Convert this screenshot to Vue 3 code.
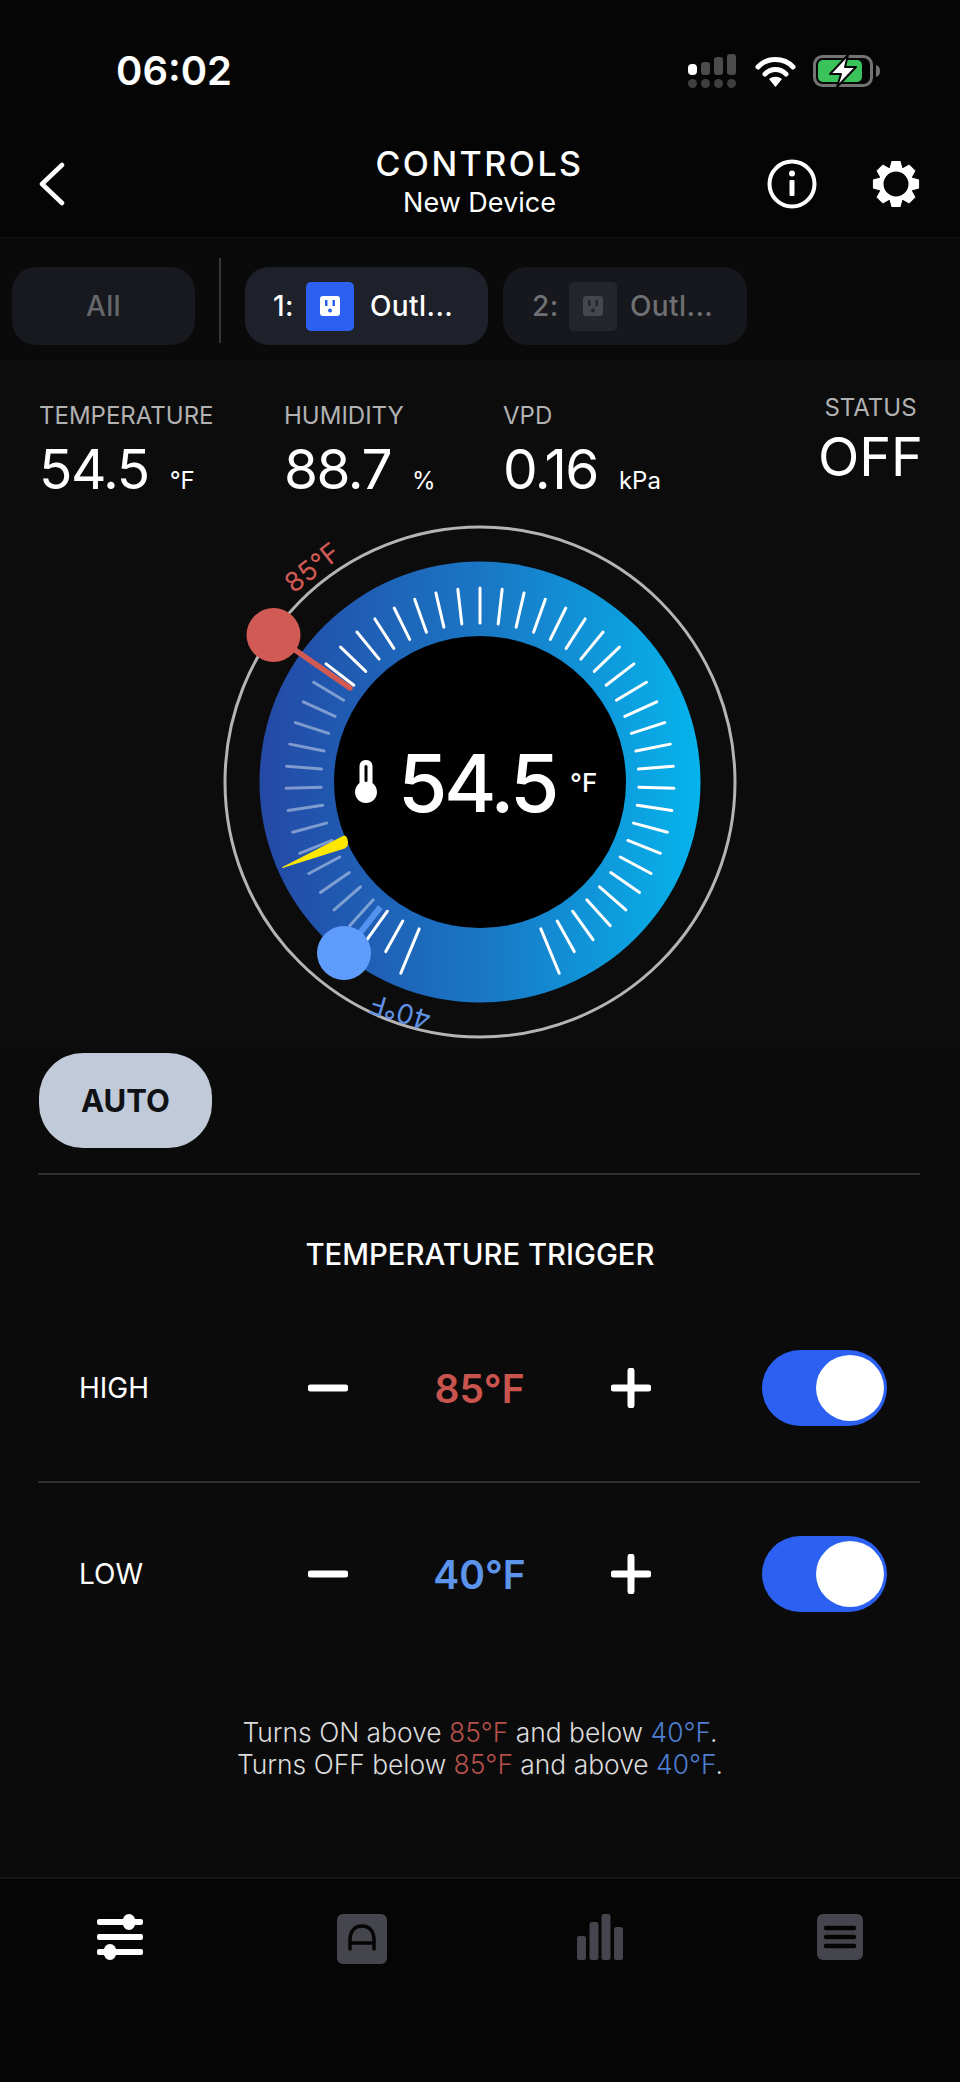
<template>
  <div class="page">
    <header class="head">
      <div class="status-bar">
        <span class="time">06:02</span>
        <div class="status-icons">
          <svg width="49" height="34" viewBox="0 0 49 34">
            <rect x="0" y="10" width="9" height="11" rx="4" fill="#fff" />
            <rect x="13" y="8" width="9" height="13" rx="3" fill="#4b4b4b" />
            <rect x="26" y="3" width="9" height="18" rx="3" fill="#4b4b4b" />
            <rect x="39" y="0" width="9" height="21" rx="3" fill="#4b4b4b" />
            <circle v-for="x in [4.5, 17.5, 30.5, 43.5]" :key="x" :cx="x" cy="29.5" r="4.5" fill="#3f3f3f" />
          </svg>
          <svg class="wifi" width="41" height="31" viewBox="0 0 41 31">
            <path d="M3 11C12 1 29 1 38 11M10 18C16 12 25 12 31 18" fill="none" stroke="#fff" stroke-width="5" stroke-linecap="round" />
            <path d="M14 23L20.500 31L27 23C23 20 18 20 14 23Z" fill="#fff" />
          </svg>
          <svg class="battery" width="67" height="34" viewBox="0 0 67 34">
            <rect x="1.500" y="2.500" width="57" height="29" rx="8" fill="none" stroke="#737373" stroke-width="3" />
            <path d="M63 11C66 12 67 14 67 17C67 20 66 22 63 23Z" fill="#737373" />
            <rect x="5" y="6" width="44" height="22" rx="5" fill="#3ac35a" />
            <path d="M35 1L17 20H28L24 33L43 13H32Z" fill="#fff" stroke="#050505" stroke-width="2" stroke-linejoin="round" />
          </svg>
        </div>
      </div>
      <div class="topbar">
        <svg class="back" width="28" height="44" viewBox="0 0 28 44">
          <path d="M24 3L4 22L24 41" fill="none" stroke="#fff" stroke-width="4.500" stroke-linecap="round" stroke-linejoin="round" />
        </svg>
        <div class="title">
          <div class="title-main">CONTROLS</div>
          <div class="title-sub">New Device</div>
        </div>
        <svg class="info" width="50" height="50" viewBox="0 0 50 50">
          <circle cx="25" cy="25" r="22.500" fill="none" stroke="#fff" stroke-width="4" />
          <circle cx="25" cy="14.500" r="3" fill="#fff" />
          <rect x="22.500" y="21" width="5" height="16" rx="1" fill="#fff" />
        </svg>
        <svg class="gear" width="48" height="48" viewBox="-24 -24 48 48">
          <path :d="gearPath" fill="#fff" fill-rule="evenodd" />
        </svg>
      </div>
    </header>

    <nav class="tabs">
      <div class="pill pill-all">All</div>
      <div class="tab-sep"></div>
      <div class="pill pill-on">
        <span class="num">1:</span>
        <span class="plug plug-on">
          <svg width="20" height="20" viewBox="0 0 20 20">
            <rect width="20" height="20" rx="3" fill="#fff" />
            <rect x="5" y="4" width="2.500" height="6" fill="#2c60f0" />
            <rect x="12.500" y="4" width="2.500" height="6" fill="#2c60f0" />
            <circle cx="10" cy="14.500" r="2" fill="#2c60f0" />
          </svg>
        </span>
        <span>Outl...</span>
      </div>
      <div class="pill pill-off">
        <span class="num">2:</span>
        <span class="plug plug-off">
          <svg width="20" height="20" viewBox="0 0 20 20">
            <rect width="20" height="20" rx="3" fill="#45474d" />
            <rect x="5" y="4" width="2.500" height="6" fill="#24262d" />
            <rect x="12.500" y="4" width="2.500" height="6" fill="#24262d" />
            <circle cx="10" cy="14.500" r="2" fill="#24262d" />
          </svg>
        </span>
        <span>Outl...</span>
      </div>
    </nav>

    <section class="stats">
      <div v-for="s in stats" :key="s.label" class="stat">
        <div class="stat-label">{{ s.label }}</div>
        <div class="stat-value">{{ s.value }}<span class="stat-unit">{{ s.unit }}</span></div>
      </div>
      <div class="stat-status">
        <div class="stat-label">STATUS</div>
        <div class="status-val">OFF</div>
      </div>
    </section>

    <div class="gauge-wrap">
      <svg class="gauge" width="540" height="540" viewBox="-270 -270 540 540">
        <defs>
          <linearGradient id="ringFill" x1="0" y1="0" x2="1" y2="0">
            <stop offset="0" stop-color="#2449a5" />
            <stop offset="0.5" stop-color="#1a76c5" />
            <stop offset="1" stop-color="#05b4ec" />
          </linearGradient>
        </defs>
        <circle r="255" fill="none" stroke="#b4b4b4" stroke-width="3" />
        <circle r="220.500" fill="url(#ringFill)" />
        <circle r="146" fill="#000" />

        <line
          v-for="t in ticks"
          :key="t.i"
          :x1="t.x1"
          :y1="t.y1"
          :x2="t.x2"
          :y2="t.y2"
          :stroke="t.color"
          stroke-width="3"
          stroke-linecap="round"
        />

        <!-- low marker -->
        <line :x1="low.x1" :y1="low.y1" :x2="low.x2" :y2="low.y2" stroke="#5e9dfb" stroke-width="6" opacity="0.85" />
        <circle cx="-136" cy="171" r="27" fill="#5e9dfb" />
        <text class="arc-label" fill="#5f92e4" transform="translate(-77 221) rotate(197)" text-anchor="middle">40°F</text>

        <!-- high marker -->
        <line x1="-195" y1="-139" x2="-130" y2="-94" stroke="#d15a54" stroke-width="5.500" stroke-linecap="round" />
        <circle cx="-206.500" cy="-147" r="27" fill="#d15a54" />
        <text class="arc-label" fill="#d15a54" transform="translate(-162 -207) rotate(-38)" text-anchor="middle">85°F</text>

        <!-- needle -->
        <path d="M-197.500 85.500L-137 54.500C-134 53 -133 56 -132.500 60C-132 64 -134 66 -137 66.500Z" fill="#ffe800" stroke="#ffe800" stroke-width="1" stroke-linejoin="round" />

        <!-- thermometer -->
        <path d="M-120.500 -15.500C-120.500 -19.500 -118 -22 -114 -22C-110 -22 -107.500 -19.500 -107.500 -15.500V1C-105 3 -103 6 -103 10C-103 16.500 -108 21 -114 21C-120 21 -125 16.500 -125 10C-125 6 -123 3 -120.500 1Z" fill="#fff" />
        <rect x="-115.500" y="-17" width="3" height="17" rx="1.500" fill="#000" />

        <text class="center-temp" x="-82" y="30">54.5</text>
        <text class="center-unit" x="90" y="10">°F</text>
      </svg>
    </div>

    <button class="auto">AUTO</button>
    <div class="rule rule-first"></div>

    <h2 class="trigger-title">TEMPERATURE TRIGGER</h2>

    <div class="row row-high">
      <span class="row-label">HIGH</span>
      <svg width="40" height="40" viewBox="0 0 40 40"><path d="M3 20H37" stroke="#fff" stroke-width="7" stroke-linecap="round" /></svg>
      <span class="row-val high">85°F</span>
      <svg width="40" height="40" viewBox="0 0 40 40"><path d="M3 20H37M20 3V37" stroke="#fff" stroke-width="7" stroke-linecap="round" /></svg>
      <span></span>
      <div class="toggle"><div class="knob"></div></div>
    </div>
    <div class="rule"></div>
    <div class="row">
      <span class="row-label">LOW</span>
      <svg width="40" height="40" viewBox="0 0 40 40"><path d="M3 20H37" stroke="#fff" stroke-width="7" stroke-linecap="round" /></svg>
      <span class="row-val low">40°F</span>
      <svg width="40" height="40" viewBox="0 0 40 40"><path d="M3 20H37M20 3V37" stroke="#fff" stroke-width="7" stroke-linecap="round" /></svg>
      <span></span>
      <div class="toggle"><div class="knob"></div></div>
    </div>

    <p class="note">
      Turns ON above <span class="high">85°F</span> and below <span class="low">40°F</span>.<br />
      Turns OFF below <span class="high">85°F</span> and above <span class="low">40°F</span>.
    </p>

    <footer class="tabbar">
      <div class="tab-item">
        <svg width="46" height="46" viewBox="0 0 46 46">
          <rect x="0" y="5" width="46" height="6" rx="2" fill="#fff" />
          <rect x="0" y="20" width="46" height="6" rx="2" fill="#fff" />
          <rect x="0" y="35" width="46" height="6" rx="2" fill="#fff" />
          <ellipse cx="32" cy="8" rx="6.500" ry="8" fill="#fff" />
          <ellipse cx="13" cy="38" rx="6.500" ry="8" fill="#fff" />
        </svg>
      </div>
      <div class="tab-item tab-a">
        <svg width="50" height="50" viewBox="0 0 50 50">
          <rect width="50" height="50" rx="6" fill="#45464d" />
          <path d="M13 35V26C13 17 18 12 25 12C32 12 37 17 37 26V35M13 29H37" fill="none" stroke="#050505" stroke-width="3.500" stroke-linecap="round" />
        </svg>
      </div>
      <div class="tab-item">
        <svg width="46" height="46" viewBox="0 0 46 46">
          <rect x="0" y="22" width="9" height="24" rx="2.500" fill="#45464d" />
          <rect x="12.500" y="8" width="9" height="38" rx="2.500" fill="#45464d" />
          <rect x="24.500" y="0" width="9" height="46" rx="2.500" fill="#45464d" />
          <rect x="37" y="13" width="9" height="33" rx="2.500" fill="#45464d" />
        </svg>
      </div>
      <div class="tab-item">
        <svg width="46" height="46" viewBox="0 0 46 46">
          <rect width="46" height="46" rx="6" fill="#45464d" />
          <path d="M9 14H37M9 23H37M9 32H37" stroke="#050505" stroke-width="4.500" stroke-linecap="round" />
        </svg>
      </div>
    </footer>
  </div>
</template>

<script setup>
const stats = [
  { label: 'TEMPERATURE', value: '54.5', unit: '°F' },
  { label: 'HUMIDITY', value: '88.7', unit: '%' },
  { label: 'VPD', value: '0.16', unit: 'kPa' }
]

const polar = (deg, r) => {
  const a = (deg * Math.PI) / 180
  return [+(Math.cos(a) * r).toFixed(2), +(Math.sin(a) * r).toFixed(2)]
}

// 49 ticks over 315 degrees, gap at the bottom
const ticks = Array.from({ length: 49 }, (_, i) => {
  const deg = 112.5 + i * 6.5625
  const long = i === 0 || i === 48
  const [x1, y1] = polar(deg, 159)
  const [x2, y2] = polar(deg, long ? 207 : 194)
  const faded = i >= 3 && i <= 15
  return { i, x1, y1, x2, y2, color: faded ? 'rgba(255,255,255,0.42)' : '#fff' }
})

const [lx1, ly1] = polar(128.5, 160)
const [lx2, ly2] = polar(128.5, 200)
const low = { x1: lx1, y1: ly1, x2: lx2, y2: ly2 }

// 8 tooth gear with a round hole
const buildGear = () => {
  const pts = []
  for (let i = 0; i < 8; i++) {
    const c = i * 45 - 90
    pts.push(polar(c - 21, 17.5), polar(c - 11, 23.5), polar(c + 11, 23.5), polar(c + 21, 17.5))
  }
  const outer = 'M' + pts.map((p) => p.join(' ')).join('L') + 'Z'
  return outer + 'M12.5 0A12.5 12.5 0 1 0 -12.5 0A12.5 12.5 0 1 0 12.5 0Z'
}
const gearPath = buildGear()
</script>

<style scoped>
.page {
  width: 960px;
  height: 2082px;
  display: flex;
  flex-direction: column;
  background: #0b0b0c;
  color: #fff;
  font-family: Inter, "Liberation Sans", sans-serif;
  overflow: hidden;
}

.head {
  height: 238px;
  background: #050505;
  border-bottom: 1px solid #141416;
  box-sizing: border-box;
}

.status-bar {
  height: 142px;
  display: flex;
  align-items: center;
  justify-content: space-between;
  padding: 0 80px 0 116px;
}

.time {
  font-size: 40px;
  font-weight: 600;
  margin-top: -2px;
}

.status-icons {
  display: flex;
  align-items: center;
}

.wifi {
  margin-left: 18px;
}

.battery {
  margin-left: 17px;
}

.topbar {
  position: relative;
  height: 96px;
  display: flex;
  align-items: center;
  padding: 0 40px 12px 38px;
  box-sizing: border-box;
}

.title {
  flex: 1;
  text-align: center;
  padding-left: 126px;
  padding-bottom: 4px;
}

.title-main {
  font-size: 34px;
  font-weight: 500;
  letter-spacing: 2.5px;
  line-height: 38px;
}

.title-sub {
  font-size: 27px;
  line-height: 32px;
  margin-top: 4px;
}

.gear {
  margin-left: 55px;
}

.tabs {
  height: 122px;
  display: flex;
  align-items: flex-start;
  padding: 29px 0 0 12px;
  box-sizing: border-box;
  background: #0a0a0b;
}

.pill {
  height: 78px;
  border-radius: 24px;
  display: flex;
  align-items: center;
  font-size: 28px;
  font-weight: 500;
  letter-spacing: 0.4px;
  box-sizing: border-box;
}

.pill-all {
  width: 183px;
  justify-content: center;
  background: #17191e;
  color: #66676b;
}

.tab-sep {
  width: 2px;
  height: 85px;
  margin: -9px 24px 0 24px;
  background: #35363a;
}

.pill-on {
  width: 243px;
  padding-left: 28px;
  background: #1e2129;
  color: #fff;
}

.pill-off {
  width: 244px;
  margin-left: 15px;
  padding-left: 29px;
  background: #17181d;
  color: #6f7074;
}

.num {
  width: 33px;
}

.pill-off .num {
  width: 37px;
}

.plug {
  width: 48px;
  height: 49px;
  border-radius: 5px;
  margin-right: 16px;
  display: flex;
  align-items: center;
  justify-content: center;
}

.plug-on {
  background: #2c60f0;
}

.plug-off {
  background: #24262d;
  margin-right: 13px;
}

.stats {
  height: 152px;
  display: flex;
  padding: 0 37px 0 39px;
  box-sizing: border-box;
  background: #0c0c0d;
}

.stat {
  padding-top: 41px;
}

.stat:nth-child(1) {
  width: 245px;
}

.stat:nth-child(2) {
  width: 219px;
}

.stat-label {
  font-size: 24px;
  line-height: 30px;
  color: #b2b2b2;
}

.stat-value {
  font-size: 55px;
  letter-spacing: -1.5px;
  line-height: 66px;
  margin-top: 5px;
}

.stat-unit {
  font-size: 24px;
  letter-spacing: 0;
  margin-left: 21px;
}

.stat-status {
  margin-left: auto;
  padding-top: 33px;
  text-align: center;
}

.status-val {
  font-size: 54px;
  line-height: 66px;
  margin-top: 1px;
}

.gauge-wrap {
  height: 540px;
  display: flex;
  justify-content: center;
  background: #0c0c0d;
}

.gauge {
  overflow: visible;
}

.arc-label {
  font-size: 27px;
}

.center-temp {
  font-size: 80px;
  font-weight: 500;
  letter-spacing: -3.5px;
  fill: #fff;
}

.center-unit {
  font-size: 26px;
  font-weight: 500;
  fill: #fff;
}

.auto {
  width: 173px;
  height: 95px;
  margin: 1px 0 0 39px;
  border: 0;
  border-radius: 44px;
  background: #c0cad9;
  color: #101114;
  font-family: inherit;
  font-size: 31px;
  font-weight: 700;
}

.rule {
  height: 2px;
  margin: 0 40px 0 38px;
  background: #2f2f30;
}

.rule-first {
  margin-top: 25px;
}

.trigger-title {
  margin: 0;
  padding-top: 62px;
  text-align: center;
  font-size: 29.300px;
  font-weight: 500;
  line-height: 36px;
}

.row {
  height: 182px;
  display: grid;
  grid-template-columns: 229px 40px 263px 40px 111px 125px;
  align-items: center;
  padding-left: 79px;
}

.row-high {
  height: 208px;
  padding-top: 22px;
  box-sizing: border-box;
}

.row-label {
  font-size: 28px;
}

.row-val {
  text-align: center;
  font-size: 39px;
  font-weight: 600;
}

.high {
  color: #c9544e;
}

.low {
  color: #5b94ea;
}

.toggle {
  position: relative;
  width: 125px;
  height: 76px;
  border-radius: 38px;
  background: #2c60f0;
}

.knob {
  position: absolute;
  top: 5px;
  right: 3px;
  width: 68px;
  height: 66px;
  border-radius: 50%;
  background: #fff;
}

.note {
  margin: 51px 0 0;
  text-align: center;
  font-size: 26.400px;
  font-weight: 300;
  line-height: 32px;
  color: #dcdcdc;
}

.note .high {
  color: #b5504a;
}

.note .low {
  color: #4f7fd0;
}

.tabbar {
  margin-top: auto;
  height: 205px;
  display: grid;
  grid-template-columns: repeat(4, 1fr);
  box-sizing: border-box;
  padding-top: 35px;
  background: #050505;
  border-top: 2px solid #141416;
}

.tab-item {
  display: flex;
  justify-content: center;
  align-items: flex-start;
  height: 50px;
}

.tab-a {
  padding-left: 4px;
}
</style>

<style>
body {
  background: #0b0b0c;
}
</style>
